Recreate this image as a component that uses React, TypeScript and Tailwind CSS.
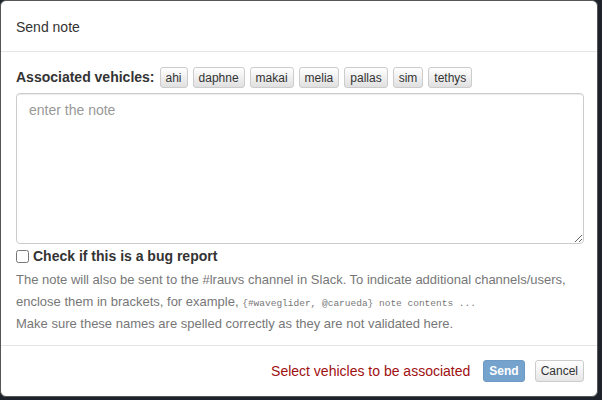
import { useState } from "react";

const vehicles = ["ahi", "daphne", "makai", "melia", "pallas", "sim", "tethys"];

export default function App() {
  const [note, setNote] = useState("");
  const [bug, setBug] = useState(false);

  return (
    <div className="w-[602px] h-[400px] bg-[#1e232b] font-['Liberation_Sans',Arial,sans-serif] text-[#333]">
      <div className="w-[598px] h-[397px] bg-white rounded-md border border-[#555] flex flex-col overflow-hidden">
        <div className="h-[51px] px-[15px] pt-[2px] flex items-center border-b border-[#e5e5e5] text-[14px]">
          Send note
        </div>

        <div className="flex-1 px-[15px] pt-[15px]">
          <div className="flex items-center gap-[5px] h-[21px]">
            <span className="font-bold text-[14px]">Associated vehicles:</span>
            {vehicles.map((v) => (
              <button
                key={v}
                type="button"
                className="h-[21px] px-[5px] text-[12px] leading-none border border-[#ccc] rounded-[3px] bg-gradient-to-b from-white to-[#e0e0e0] text-[#333]"
              >
                {v}
              </button>
            ))}
          </div>

          <textarea
            value={note}
            onChange={(e) => setNote(e.target.value)}
            placeholder="enter the note"
            className="mt-[5px] block w-[568px] h-[151px] border border-[#ccc] rounded-[4px] px-3 py-[6px] text-[14px] leading-[20px] placeholder:text-[#999] shadow-[inset_0_1px_1px_rgba(0,0,0,0.075)] outline-none"
          />

          <label className="flex items-center gap-[4px] h-[22px] mt-[1px] font-bold text-[14px]">
            <input
              type="checkbox"
              checked={bug}
              onChange={(e) => setBug(e.target.checked)}
              className="w-[13px] h-[13px] m-0"
            />
            Check if this is a bug report
          </label>

          <div className="mt-[2px] text-[13px] leading-[22px] text-[#777]">
            <div>The note will also be sent to the #lrauvs channel in Slack. To indicate additional channels/users,</div>
            <div>
              enclose them in brackets, for example,{" "}
              <span className="font-['Liberation_Mono',monospace] text-[9.5px] leading-none">
                {"{#waveglider, @carueda} note contents ..."}
              </span>
            </div>
            <div>Make sure these names are spelled correctly as they are not validated here.</div>
          </div>
        </div>

        <div className="h-[51px] border-t border-[#e5e5e5] flex items-center justify-end pr-[13px] gap-[10px]">
          <span className="text-[14px] text-[#a01010] mr-[3px]">Select vehicles to be associated</span>
          <button
            type="button"
            disabled
            className="h-[22px] px-[5px] rounded-[3px] bg-[#75a3cd] border border-[#6d9bc6] text-white font-bold text-[12px]"
          >
            Send
          </button>
          <button
            type="button"
            className="h-[22px] px-[5px] rounded-[3px] border border-[#ccc] bg-gradient-to-b from-white to-[#e6e6e6] text-[#333] text-[12px]"
          >
            Cancel
          </button>
        </div>
      </div>
    </div>
  );
}
